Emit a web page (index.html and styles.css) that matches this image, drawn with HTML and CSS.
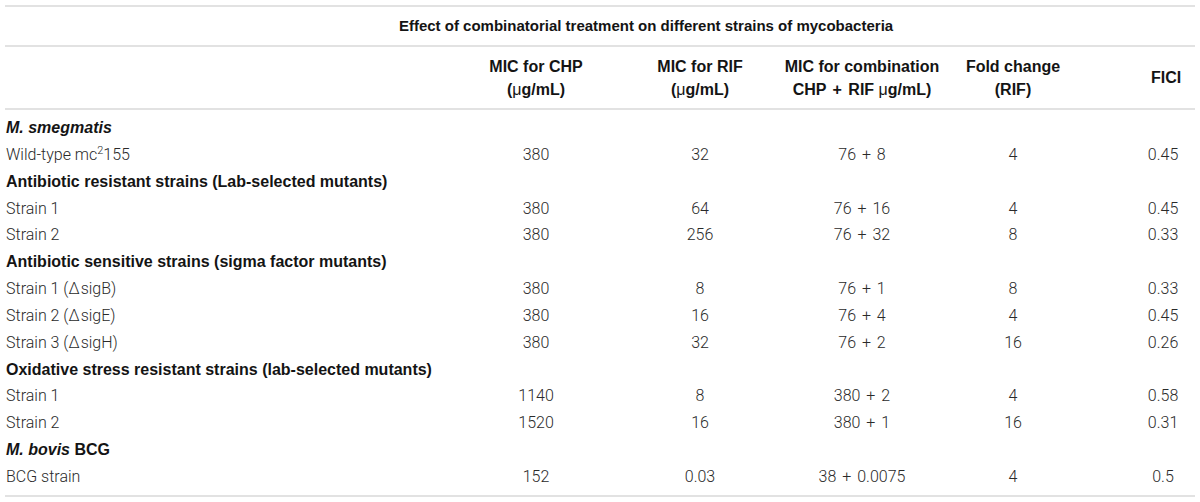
FILE: index.html
```html
<!DOCTYPE html>
<html lang="en">
<head>
<meta charset="utf-8">
<title>Effect of combinatorial treatment</title>
<link rel="stylesheet" href="styles.css">
</head>
<body>
<div class="wrap">
<table class="mic">
  <colgroup>
    <col class="c1"><col class="c2"><col class="c3"><col class="c4"><col class="c5"><col class="c6">
  </colgroup>
  <thead>
    <tr class="title-row"><th colspan="6" class="title">Effect of combinatorial treatment on different strains of mycobacteria</th></tr>
    <tr class="head-row">
      <th></th>
      <th>MIC for CHP<br>(<span class="mu">μ</span>g/mL)</th>
      <th>MIC for RIF<br>(<span class="mu">μ</span>g/mL)</th>
      <th>MIC for combination<br>CHP <span class="op">+</span> RIF <span class="mu">μ</span>g/mL)</th>
      <th>Fold change<br>(RIF)</th>
      <th class="last">FICI</th>
    </tr>
  </thead>
  <tbody>
    <tr class="group first"><td colspan="6"><i>M. smegmatis</i></td></tr>
    <tr><td>Wild-type mc<sup>2</sup>155</td><td>380</td><td>32</td><td>76 <span class="op">+</span> 8</td><td>4</td><td class="last">0.45</td></tr>
    <tr class="group"><td colspan="6">Antibiotic resistant strains (Lab-selected mutants)</td></tr>
    <tr><td>Strain 1</td><td>380</td><td>64</td><td>76 <span class="op">+</span> 16</td><td>4</td><td class="last">0.45</td></tr>
    <tr><td>Strain 2</td><td>380</td><td>256</td><td>76 <span class="op">+</span> 32</td><td>8</td><td class="last">0.33</td></tr>
    <tr class="group"><td colspan="6">Antibiotic sensitive strains (sigma factor mutants)</td></tr>
    <tr><td>Strain 1 (<span class="delta">Δ</span>sigB)</td><td>380</td><td>8</td><td>76 <span class="op">+</span> 1</td><td>8</td><td class="last">0.33</td></tr>
    <tr><td>Strain 2 (<span class="delta">Δ</span>sigE)</td><td>380</td><td>16</td><td>76 <span class="op">+</span> 4</td><td>4</td><td class="last">0.45</td></tr>
    <tr><td>Strain 3 (<span class="delta">Δ</span>sigH)</td><td>380</td><td>32</td><td>76 <span class="op">+</span> 2</td><td>16</td><td class="last">0.26</td></tr>
    <tr class="group"><td colspan="6">Oxidative stress resistant strains (lab-selected mutants)</td></tr>
    <tr><td>Strain 1</td><td>1140</td><td>8</td><td>380 <span class="op">+</span> 2</td><td>4</td><td class="last">0.58</td></tr>
    <tr><td>Strain 2</td><td>1520</td><td>16</td><td>380 <span class="op">+</span> 1</td><td>16</td><td class="last">0.31</td></tr>
    <tr class="group"><td colspan="6"><i>M. bovis</i> BCG</td></tr>
    <tr class="final"><td>BCG strain</td><td>152</td><td>0.03</td><td>38 <span class="op">+</span> 0.0075</td><td>4</td><td class="last">0.5</td></tr>
  </tbody>
</table>
</div>
</body>
</html>
```

FILE: styles.css
```css
html, body {
  margin: 0;
  padding: 0;
  background: #ffffff;
}

.wrap {
  padding: 5px 5px 0 5px;
}

.mic {
  width: 1190px;
  border-collapse: collapse;
  table-layout: fixed;
  font-family: "Liberation Sans", Arial, sans-serif;
  font-size: 16px;
  color: #141414;
}

.c1 { width: 438px; }
.c2 { width: 186px; }
.c3 { width: 142px; }
.c4 { width: 182px; }
.c5 { width: 120px; }
.c6 { width: 122px; }

.mic th {
  font-weight: bold;
  padding: 0;
}

.title-row th {
  border-top: 2px solid #e2e2e2;
  border-bottom: 2px solid #e2e2e2;
  height: 38px;
  font-size: 15px;
  line-height: 20px;
  text-align: center;
  padding: 0 0 0 92px;
}

.head-row th {
  border-bottom: 2px solid #e2e2e2;
  height: 61px;
  line-height: 23px;
  text-align: center;
  vertical-align: middle;
}

.head-row th.last {
  padding-left: 64px;
}

.mic td.last {
  padding-left: 58px;
}

.mu {
  font-weight: normal;
}

.op {
  margin: 0 2px;
}

.mic td {
  padding: 0;
  height: 26.85px;
  line-height: 26.85px;
  text-align: center;
  font-family: Roboto, "Liberation Sans", sans-serif;
  font-weight: 300;
  color: #2a2a2a;
  white-space: nowrap;
}

.mic td:first-child {
  text-align: left;
  padding-left: 1px;
}

.delta {
  margin-right: 1px;
}

.mic tr.group td {
  font-family: "Liberation Sans", Arial, sans-serif;
  font-weight: bold;
  color: #141414;
}

.mic tr.first td {
  padding-top: 5px;
}

.mic tr.final td {
  padding-bottom: 4px;
  border-bottom: 2px solid #e2e2e2;
}

sup {
  font-size: 11px;
  line-height: 0;
  vertical-align: 6px;
}
```
